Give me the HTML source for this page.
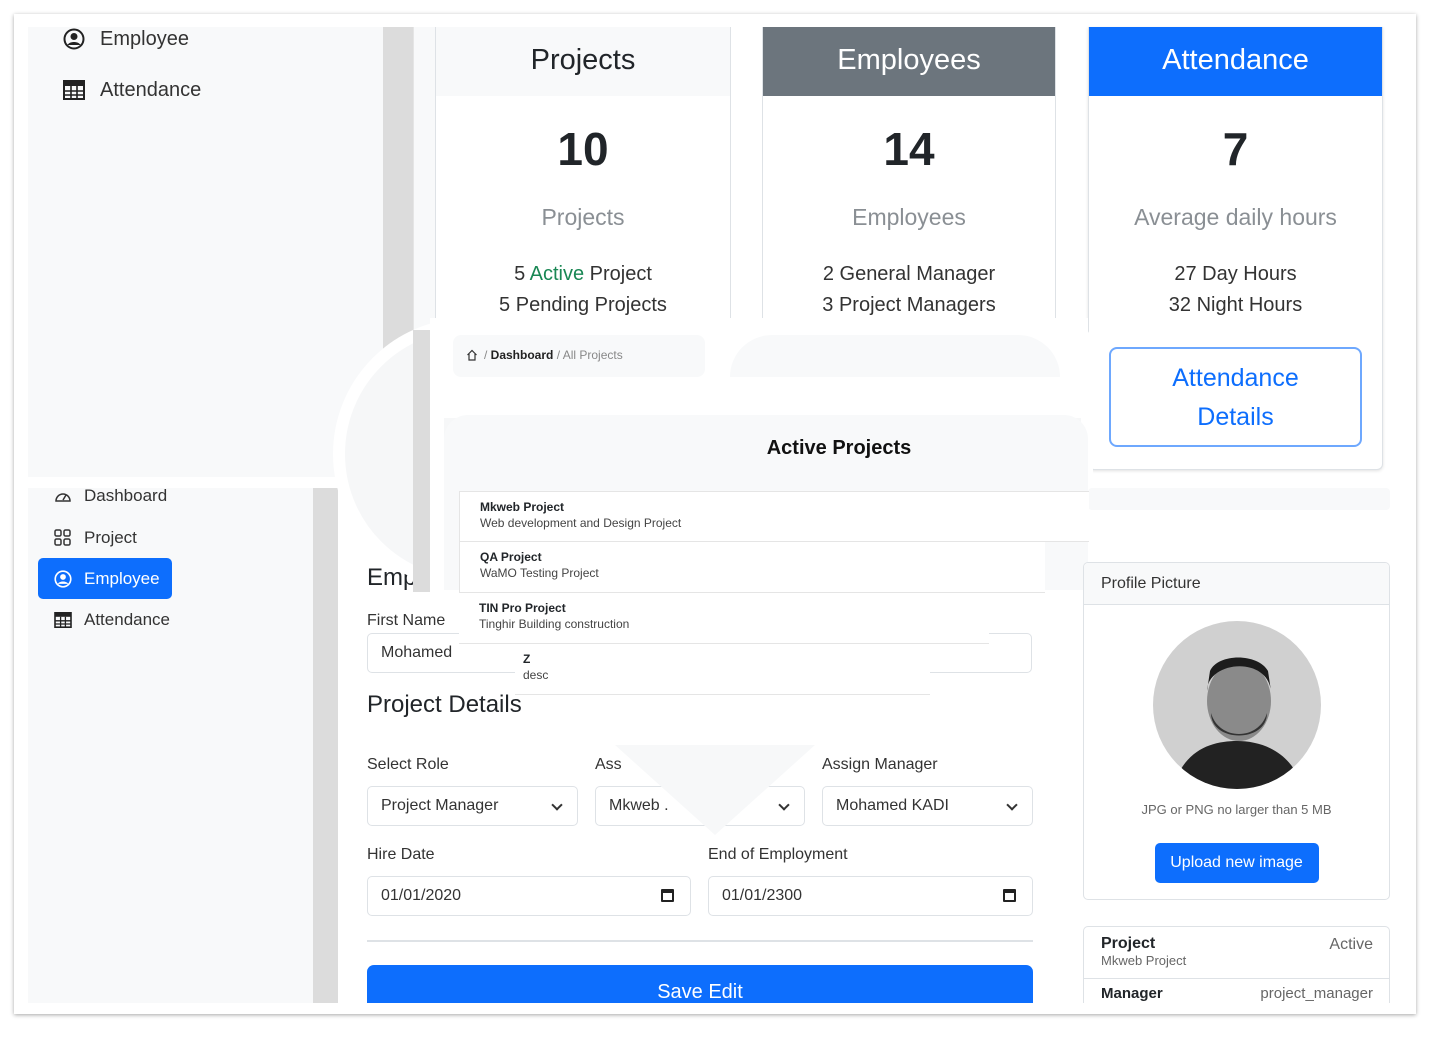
<!DOCTYPE html>
<html><head><meta charset="utf-8">
<style>
*{box-sizing:border-box;margin:0;padding:0}
body{width:1440px;height:1040px;background:#fff;font-family:"Liberation Sans",sans-serif;color:#212529;position:relative;overflow:hidden}
.a{position:absolute}
.frame{left:14px;top:14px;width:1402px;height:1000px;background:#fff;box-shadow:0 1px 4px rgba(0,0,0,.35)}
.lt{background:#f8f9fa}
.strip{background:#dcdcdc}
.card{border:1px solid #dee2e6;background:#fff;text-align:center}
.hdr{height:69px;font-size:29px;line-height:66px}
.big{font-size:46px;font-weight:bold;margin-top:26px;height:56px}
.sub{font-size:23px;color:#8a8f94;margin-top:26px}
.ln{font-size:20px;line-height:31px;color:#333}
.inp{border:1px solid #dee2e6;border-radius:5px;background:#fff;font-size:16px;color:#333;padding-left:13px;line-height:38px;height:40px}
.lbl{font-size:16px;color:#333}
.chev{position:absolute;right:16px;top:14px;width:8px;height:8px;border-right:2px solid #333;border-bottom:2px solid #333;transform:rotate(45deg)}
.cal{position:absolute;right:16px;top:12px;width:13px;height:13px;border:2px solid #222;border-top-width:4px;border-radius:1px}
.li{position:absolute;background:#fff;border-bottom:1px solid #e5e5e5;padding:8px 20px;height:51px}
.li b{font-size:12px;display:block}
.li span{font-size:12px;color:#444}
.nav{font-size:17px;color:#333}
</style></head><body>
<div class="a frame"></div>

<div class="a lt" style="left:28px;top:27px;width:355px;height:450px"></div>
<div class="a strip" style="left:383px;top:27px;width:30px;height:345px"></div>
<div class="a" style="left:413px;top:27px;width:22px;height:320px;background:#f8f9fa;border-left:1px solid #e5e5e5"></div>
<svg class="a" style="left:63px;top:28px" width="22" height="22" viewBox="0 0 22 22"><circle cx="11" cy="11" r="9.5" fill="none" stroke="#222" stroke-width="2"/><circle cx="11" cy="8.5" r="3.5" fill="#222"/><path d="M4.5 17c2-4 11-4 13 0" fill="#222"/></svg>
<div class="a" style="left:100px;top:28px;font-size:20px;color:#333">Employee</div>
<svg class="a" style="left:63px;top:80px" width="22" height="20" viewBox="0 0 22 20"><rect x="1" y="1" width="20" height="18" fill="none" stroke="#222" stroke-width="2"/><rect x="1" y="1" width="20" height="5" fill="#222"/><path d="M1 11h20M1 15h20M8 6v13M14 6v13" stroke="#222" stroke-width="1.6"/></svg>
<div class="a" style="left:100px;top:79px;font-size:20px;color:#333">Attendance</div>

<div class="a card" style="left:435px;top:27px;width:296px;height:330px;border-top:none">
 <div class="hdr" style="background:#f8f9fa">Projects</div>
 <div class="big">10</div><div class="sub">Projects</div>
 <div class="ln" style="margin-top:28px">5 <span style="color:#198754">Active</span> Project</div>
 <div class="ln">5 Pending Projects</div>
</div>
<div class="a card" style="left:762px;top:27px;width:294px;height:330px;border-top:none">
 <div class="hdr" style="background:#6c757d;color:#fff">Employees</div>
 <div class="big">14</div><div class="sub">Employees</div>
 <div class="ln" style="margin-top:28px">2 General Manager</div>
 <div class="ln">3 Project Managers</div>
</div>
<div class="a card" style="left:1088px;top:27px;width:295px;height:443px;border-top:none;border-radius:0 0 6px 6px;box-shadow:0 1px 3px rgba(0,0,0,.12)">
 <div class="hdr" style="background:#0d6efd;color:#fff">Attendance</div>
 <div class="big">7</div><div class="sub">Average daily hours</div>
 <div class="ln" style="margin-top:28px">27 Day Hours</div>
 <div class="ln">32 Night Hours</div>
 <div style="margin:26px auto 0;width:253px;height:100px;border:2px solid #6ea8fe;border-radius:8px;color:#0d6efd;font-size:25px;line-height:39px;padding-top:10px">Attendance<br>Details</div>
</div>

<div class="a lt" style="left:28px;top:488px;width:285px;height:515px"></div>
<div class="a strip" style="left:313px;top:488px;width:25px;height:515px"></div>
<svg class="a" style="left:54px;top:489px" width="18" height="14" viewBox="0 0 18 14"><path d="M2 12a7 7 0 1 1 14 0z" fill="none" stroke="#333" stroke-width="1.5"/><path d="M9 11l3-5" stroke="#333" stroke-width="1.5"/></svg>
<div class="a nav" style="left:84px;top:486px">Dashboard</div>
<svg class="a" style="left:54px;top:529px" width="17" height="17" viewBox="0 0 17 17"><g fill="none" stroke="#333" stroke-width="1.5"><rect x="1" y="1" width="6" height="6" rx="1.5"/><rect x="10" y="1" width="6" height="6" rx="1.5"/><rect x="1" y="10" width="6" height="6" rx="1.5"/><rect x="10" y="10" width="6" height="6" rx="1.5"/></g></svg>
<div class="a nav" style="left:84px;top:528px">Project</div>
<div class="a" style="left:38px;top:558px;width:134px;height:41px;background:#0d6efd;border-radius:5px"></div>
<svg class="a" style="left:54px;top:570px" width="18" height="18" viewBox="0 0 22 22"><circle cx="11" cy="11" r="9.5" fill="none" stroke="#fff" stroke-width="2"/><circle cx="11" cy="8.5" r="3.5" fill="#fff"/><path d="M4.5 17c2-4 11-4 13 0" fill="#fff"/></svg>
<div class="a nav" style="left:84px;top:569px;color:#fff">Employee</div>
<svg class="a" style="left:54px;top:612px" width="18" height="16" viewBox="0 0 22 20"><rect x="1" y="1" width="20" height="18" fill="none" stroke="#222" stroke-width="2"/><rect x="1" y="1" width="20" height="5" fill="#222"/><path d="M1 11h20M1 15h20M8 6v13M14 6v13" stroke="#222" stroke-width="1.6"/></svg>
<div class="a nav" style="left:84px;top:610px">Attendance</div>

<div class="a" style="left:367px;top:564px;font-size:24px">Emp</div>
<div class="a lbl" style="left:367px;top:612px">First Name</div>
<div class="a inp" style="left:367px;top:633px;width:665px;height:40px">Mohamed</div>
<div class="a" style="left:367px;top:691px;font-size:24px">Project Details</div>
<div class="a lbl" style="left:367px;top:756px">Select Role</div>
<div class="a lbl" style="left:595px;top:756px">Ass</div>
<div class="a lbl" style="left:822px;top:756px">Assign Manager</div>
<div class="a inp" style="left:367px;top:786px;width:211px">Project Manager<i class="chev"></i></div>
<div class="a inp" style="left:595px;top:786px;width:210px">Mkweb .<i class="chev"></i></div>
<div class="a inp" style="left:822px;top:786px;width:211px">Mohamed KADI<i class="chev"></i></div>
<div class="a lbl" style="left:367px;top:846px">Hire Date</div>
<div class="a lbl" style="left:708px;top:846px">End of Employment</div>
<div class="a inp" style="left:367px;top:876px;width:324px">01/01/2020<i class="cal"></i></div>
<div class="a inp" style="left:708px;top:876px;width:325px">01/01/2300<i class="cal"></i></div>
<div class="a" style="left:367px;top:940px;width:666px;height:2px;background:#dee2e6"></div>
<div class="a" style="left:367px;top:965px;width:666px;height:38px;background:#0d6efd;border-radius:7px 7px 0 0;color:#fff;font-size:20px;text-align:center;line-height:54px;overflow:hidden">Save Edit</div>
<div class="a" style="left:615px;top:745px;width:0;height:0;border-left:100px solid transparent;border-right:100px solid transparent;border-top:90px solid #f7f8f9"></div>

<div class="a" style="left:333px;top:318px;width:760px;height:272px;background:#f6f7f8;border:12px solid #fff;border-radius:136px 30px 30px 136px"></div>
<div class="a" style="left:430px;top:318px;width:658px;height:100px;background:#fff"></div>
<div class="a strip" style="left:413px;top:330px;width:17px;height:262px"></div>
<div class="a" style="left:430px;top:330px;width:14px;height:262px;background:#fff"></div>
<div class="a lt" style="left:453px;top:335px;width:252px;height:42px;border-radius:8px"></div>
<svg class="a" style="left:466px;top:349px" width="12" height="12" viewBox="0 0 12 12"><path d="M1.5 6L6 1.5 10.5 6M3 5v6h6V5" fill="none" stroke="#333" stroke-width="1.2"/></svg>
<div class="a" style="left:484px;top:348px;font-size:12px;color:#888">/ <b style="color:#222;font-weight:600">Dashboard</b> / All Projects</div>
<div class="a lt" style="left:730px;top:335px;width:330px;height:42px;border-radius:60px 60px 0 0"></div>
<div class="a lt" style="left:444px;top:415px;width:644px;height:175px;border-radius:24px 24px 0 0"></div>
<div class="a lt" style="left:1088px;top:488px;width:302px;height:22px;border-radius:4px"></div>
<div class="a" style="left:444px;top:437px;width:790px;text-align:center;font-size:20px;font-weight:bold;color:#111">Active Projects</div>
<div class="li" style="left:459px;top:491px;width:630px;border-top:1px solid #e5e5e5;border-left:1px solid #e5e5e5"><b>Mkweb Project</b><span>Web development and Design Project</span></div>
<div class="li" style="left:459px;top:542px;width:586px;border-left:1px solid #e5e5e5"><b>QA Project</b><span>WaMO Testing Project</span></div>
<div class="li" style="left:459px;top:593px;width:530px"><b>TIN Pro Project</b><span>Tinghir Building construction</span></div>
<div class="li" style="left:515px;top:644px;width:415px;padding-left:8px"><b>Z</b><span>desc</span></div>

<div class="a" style="left:1083px;top:562px;width:307px;height:338px;border:1px solid #dee2e6;border-radius:5px;background:#fff;overflow:hidden;text-align:center">
 <div style="height:42px;background:#f8f9fa;border-bottom:1px solid #dee2e6;text-align:left;padding-left:17px;line-height:42px;font-size:16px;color:#333">Profile Picture</div>
 <svg style="margin-top:16px" width="168" height="168" viewBox="0 0 168 168"><defs><clipPath id="c"><circle cx="84" cy="84" r="84"/></clipPath></defs><circle cx="84" cy="84" r="84" fill="#d0d0d0"/><g clip-path="url(#c)"><path d="M20 168c10-40 40-48 64-48s55 10 66 48z" fill="#222"/><ellipse cx="86" cy="80" rx="32" ry="40" fill="#8a8a8a"/><path d="M54 70c0-30 60-36 64 0l-3-20c-10-18-50-18-58 0z" fill="#1c1c1c"/><path d="M58 92c8 28 48 28 56 0c0 30-56 30-56 0z" fill="#333"/></g></svg>
 <div style="font-size:13px;color:#666;margin-top:8px">JPG or PNG no larger than 5 MB</div>
 <div style="margin:26px auto 0;width:164px;height:40px;background:#0d6efd;border-radius:5px;color:#fff;font-size:16px;line-height:40px">Upload new image</div>
</div>
<div class="a" style="left:1083px;top:926px;width:307px;height:77px;border:1px solid #dee2e6;border-bottom:none;border-radius:5px 5px 0 0;background:#fff;overflow:hidden">
 <div style="padding:8px 17px;height:52px;border-bottom:1px solid #dee2e6;position:relative"><b style="font-size:16px;font-weight:600">Project</b><div style="font-size:13px;color:#666">Mkweb Project</div><div style="position:absolute;right:16px;top:9px;font-size:16px;color:#666">Active</div></div>
 <div style="padding:6px 17px;font-size:15px;position:relative"><b>Manager</b><span style="position:absolute;right:16px;color:#666">project_manager</span></div>
</div>
</body></html>
